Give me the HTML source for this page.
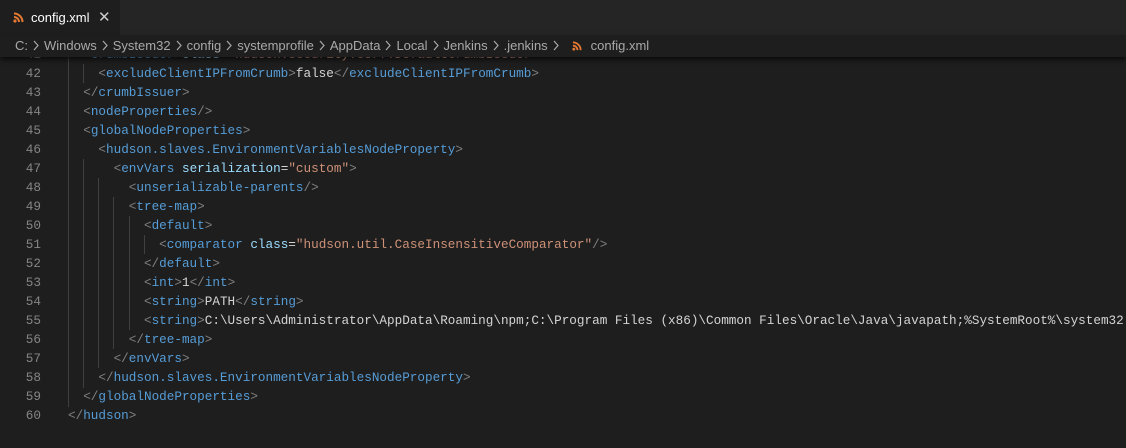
<!DOCTYPE html>
<html><head><style>
body{margin:0;width:1126px;height:448px;background:#1e1e1e;overflow:hidden;position:relative;font-family:"Liberation Sans",sans-serif}
.tabs{position:absolute;top:0;left:0;width:1126px;height:35px;background:#252526}
.tab{position:absolute;left:0;top:0;width:120px;height:35px;background:#1e1e1e;color:#fff;font-size:13px}
.tab .t{position:absolute;left:31px;top:10px}
.tab .x{position:absolute;left:98px;top:8px;font-size:15px;color:#ccc}
.rss{position:absolute}
.bc{position:absolute;top:35px;left:0;width:1126px;height:22px;background:#1e1e1e;color:#a9a9a9;font-size:13px;line-height:22px;box-shadow:0 3px 5px rgba(0,0,0,.6);z-index:2;white-space:nowrap}
.bc svg.c{margin:0 5px 0 5px;vertical-align:-1px}
.code{position:absolute;left:0;top:0;width:1126px;font-family:"Liberation Mono",monospace;font-size:12.67px;white-space:pre}
.ln{position:absolute;left:0;width:41px;text-align:right;color:#858585;height:19px;line-height:19px}
.l{position:absolute;left:68px;height:19px;line-height:19px;color:#d4d4d4}
.g{color:#808080}.t2{color:#569cd6}.a{color:#9cdcfe}.s2{color:#ce9178}
.ig{position:absolute;width:1px;background:#404040}
</style></head><body>
<div class="tabs"><div class="tab">
<svg class="rss" style="left:13px;top:12px" width="11" height="11" viewBox="0 0 11 11"><circle cx="2" cy="9" r="1.6" fill="#e37933"/><path d="M1 5a5 5 0 0 1 5 5M1 1.5a8.5 8.5 0 0 1 8.5 8.5" stroke="#e37933" stroke-width="2" fill="none"/></svg>
<span class="t">config.xml</span><span class="x">✕</span></div></div>
<div class="bc"><span style="margin-left:15px">C:</span><svg class="c" width="6" height="11" viewBox="0 0 6 11"><path d="M1 1l4 4.5L1 10" stroke="#a9a9a9" stroke-width="1.2" fill="none"/></svg>Windows<svg class="c" width="6" height="11" viewBox="0 0 6 11"><path d="M1 1l4 4.5L1 10" stroke="#a9a9a9" stroke-width="1.2" fill="none"/></svg>System32<svg class="c" width="6" height="11" viewBox="0 0 6 11"><path d="M1 1l4 4.5L1 10" stroke="#a9a9a9" stroke-width="1.2" fill="none"/></svg>config<svg class="c" width="6" height="11" viewBox="0 0 6 11"><path d="M1 1l4 4.5L1 10" stroke="#a9a9a9" stroke-width="1.2" fill="none"/></svg>systemprofile<svg class="c" width="6" height="11" viewBox="0 0 6 11"><path d="M1 1l4 4.5L1 10" stroke="#a9a9a9" stroke-width="1.2" fill="none"/></svg>AppData<svg class="c" width="6" height="11" viewBox="0 0 6 11"><path d="M1 1l4 4.5L1 10" stroke="#a9a9a9" stroke-width="1.2" fill="none"/></svg>Local<svg class="c" width="6" height="11" viewBox="0 0 6 11"><path d="M1 1l4 4.5L1 10" stroke="#a9a9a9" stroke-width="1.2" fill="none"/></svg>Jenkins<svg class="c" width="6" height="11" viewBox="0 0 6 11"><path d="M1 1l4 4.5L1 10" stroke="#a9a9a9" stroke-width="1.2" fill="none"/></svg>.jenkins<svg class="c" width="6" height="11" viewBox="0 0 6 11"><path d="M1 1l4 4.5L1 10" stroke="#a9a9a9" stroke-width="1.2" fill="none"/></svg><svg style="margin:0 9px 0 8px;vertical-align:-1px" width="10" height="10" viewBox="0 0 11 11"><circle cx="2" cy="9" r="1.6" fill="#e37933"/><path d="M1 5a5 5 0 0 1 5 5M1 1.5a8.5 8.5 0 0 1 8.5 8.5" stroke="#e37933" stroke-width="2" fill="none"/></svg>config.xml</div>
<div class="code">
<div class="ig" style="left:68px;top:45px;height:362px"></div>
<div class="ig" style="left:83px;top:64px;height:19px"></div>
<div class="ig" style="left:83px;top:159px;height:229px"></div>
<div class="ig" style="left:98px;top:178px;height:190px"></div>
<div class="ig" style="left:113px;top:197px;height:152px"></div>
<div class="ig" style="left:129px;top:216px;height:114px"></div>
<div class="ig" style="left:144px;top:235px;height:19px"></div>

<div class="ln" style="top:45px">41</div><div class="l" style="top:45px">  <span class="g">&lt;</span><span class="t2">crumbIssuer</span> <span class="a">class</span>=<span class="s2">"hudson.security.csrf.DefaultCrumbIssuer"</span><span class="g">&gt;</span></div>
<div class="ln" style="top:64px">42</div><div class="l" style="top:64px">    <span class="g">&lt;</span><span class="t2">excludeClientIPFromCrumb</span><span class="g">&gt;</span>false<span class="g">&lt;/</span><span class="t2">excludeClientIPFromCrumb</span><span class="g">&gt;</span></div>
<div class="ln" style="top:83px">43</div><div class="l" style="top:83px">  <span class="g">&lt;/</span><span class="t2">crumbIssuer</span><span class="g">&gt;</span></div>
<div class="ln" style="top:102px">44</div><div class="l" style="top:102px">  <span class="g">&lt;</span><span class="t2">nodeProperties</span><span class="g">/&gt;</span></div>
<div class="ln" style="top:121px">45</div><div class="l" style="top:121px">  <span class="g">&lt;</span><span class="t2">globalNodeProperties</span><span class="g">&gt;</span></div>
<div class="ln" style="top:140px">46</div><div class="l" style="top:140px">    <span class="g">&lt;</span><span class="t2">hudson.slaves.EnvironmentVariablesNodeProperty</span><span class="g">&gt;</span></div>
<div class="ln" style="top:159px">47</div><div class="l" style="top:159px">      <span class="g">&lt;</span><span class="t2">envVars</span> <span class="a">serialization</span>=<span class="s2">"custom"</span><span class="g">&gt;</span></div>
<div class="ln" style="top:178px">48</div><div class="l" style="top:178px">        <span class="g">&lt;</span><span class="t2">unserializable-parents</span><span class="g">/&gt;</span></div>
<div class="ln" style="top:197px">49</div><div class="l" style="top:197px">        <span class="g">&lt;</span><span class="t2">tree-map</span><span class="g">&gt;</span></div>
<div class="ln" style="top:216px">50</div><div class="l" style="top:216px">          <span class="g">&lt;</span><span class="t2">default</span><span class="g">&gt;</span></div>
<div class="ln" style="top:235px">51</div><div class="l" style="top:235px">            <span class="g">&lt;</span><span class="t2">comparator</span> <span class="a">class</span>=<span class="s2">"hudson.util.CaseInsensitiveComparator"</span><span class="g">/&gt;</span></div>
<div class="ln" style="top:254px">52</div><div class="l" style="top:254px">          <span class="g">&lt;/</span><span class="t2">default</span><span class="g">&gt;</span></div>
<div class="ln" style="top:273px">53</div><div class="l" style="top:273px">          <span class="g">&lt;</span><span class="t2">int</span><span class="g">&gt;</span>1<span class="g">&lt;/</span><span class="t2">int</span><span class="g">&gt;</span></div>
<div class="ln" style="top:292px">54</div><div class="l" style="top:292px">          <span class="g">&lt;</span><span class="t2">string</span><span class="g">&gt;</span>PATH<span class="g">&lt;/</span><span class="t2">string</span><span class="g">&gt;</span></div>
<div class="ln" style="top:311px">55</div><div class="l" style="top:311px">          <span class="g">&lt;</span><span class="t2">string</span><span class="g">&gt;</span>C:\Users\Administrator\AppData\Roaming\npm;C:\Program Files (x86)\Common Files\Oracle\Java\javapath;%SystemRoot%\system32</div>
<div class="ln" style="top:330px">56</div><div class="l" style="top:330px">        <span class="g">&lt;/</span><span class="t2">tree-map</span><span class="g">&gt;</span></div>
<div class="ln" style="top:349px">57</div><div class="l" style="top:349px">      <span class="g">&lt;/</span><span class="t2">envVars</span><span class="g">&gt;</span></div>
<div class="ln" style="top:368px">58</div><div class="l" style="top:368px">    <span class="g">&lt;/</span><span class="t2">hudson.slaves.EnvironmentVariablesNodeProperty</span><span class="g">&gt;</span></div>
<div class="ln" style="top:387px">59</div><div class="l" style="top:387px">  <span class="g">&lt;/</span><span class="t2">globalNodeProperties</span><span class="g">&gt;</span></div>
<div class="ln" style="top:406px">60</div><div class="l" style="top:406px"><span class="g">&lt;/</span><span class="t2">hudson</span><span class="g">&gt;</span></div>
</div>
</body></html>
